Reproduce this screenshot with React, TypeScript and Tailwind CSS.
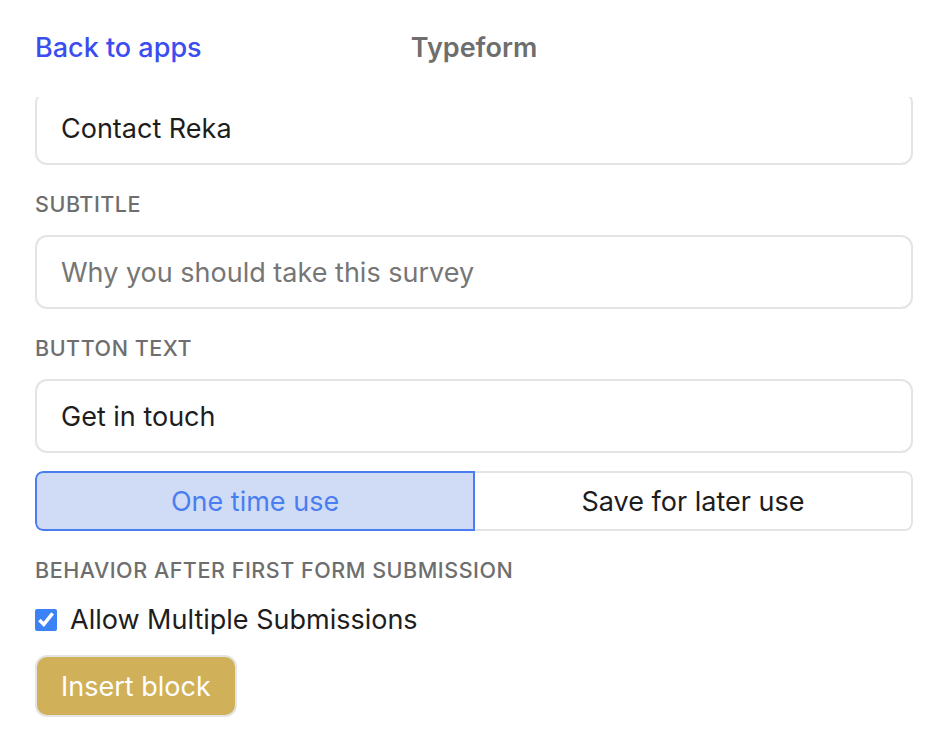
import { useState } from "react";

const font = { fontFamily: "Inter, 'Noto Sans', 'Liberation Sans', sans-serif" };

function Label({ children }: { children: React.ReactNode }) {
  return (
    <div className="text-[21.5px] leading-[24px] font-medium uppercase text-[#6e6e6e] tracking-[0.025em]">
      {children}
    </div>
  );
}

function TextField({ value, placeholder }: { value?: string; placeholder?: string }) {
  return (
    <div className="h-[74px] rounded-[12px] border-2 border-[#e4e4e4] bg-white px-[24px] pt-[3px] flex items-center text-[27px]">
      {value ? (
        <span className="text-[#1d1d1d]">{value}</span>
      ) : (
        <span className="text-[#767676]">{placeholder}</span>
      )}
    </div>
  );
}

export default function App() {
  const [mode, setMode] = useState<"once" | "later">("once");
  const [multi, setMulti] = useState(true);

  return (
    <div className="w-[950px] h-[752px] bg-white pl-[35px] pr-[37px] overflow-hidden" style={font}>
      {/* Header */}
      <div className="h-[97px] grid grid-cols-3 items-center text-[27px] font-medium">
        <a href="#" className="text-[#3b4df0]">
          Back to apps
        </a>
        <div className="text-center text-[#6e6e6e] font-semibold">Typeform</div>
        <div />
      </div>

      {/* Scrolled form content */}
      <div className="overflow-hidden">
        <div className="-mt-[6px]">
          <TextField value="Contact Reka" />

          <div className="mt-[27px] mb-[19px]">
            <Label>Subtitle</Label>
          </div>
          <TextField placeholder="Why you should take this survey" />

          <div className="mt-[27px] mb-[19px]">
            <Label>Button text</Label>
          </div>
          <TextField value="Get in touch" />

          {/* Segmented control */}
          <div className="mt-[18px] h-[60px] flex rounded-[8px] overflow-hidden text-[27px]">
            <button
              onClick={() => setMode("once")}
              className={
                mode === "once"
                  ? "flex-1 pt-[2px] bg-[#d0dcf6] border-2 border-[#4a7ef0] rounded-l-[8px] text-[#4a7ef0]"
                  : "flex-1 pt-[2px] bg-white border-2 border-r-0 border-[#e4e4e4] rounded-l-[8px] text-[#1d1d1d]"
              }
            >
              One time use
            </button>
            <button
              onClick={() => setMode("later")}
              className={
                mode === "later"
                  ? "flex-1 pt-[2px] bg-[#d0dcf6] border-2 border-[#4a7ef0] rounded-r-[8px] text-[#4a7ef0]"
                  : "flex-1 pt-[2px] bg-white border-2 border-l-0 border-[#e4e4e4] rounded-r-[8px] text-[#1d1d1d]"
              }
            >
              Save for later use
            </button>
          </div>

          <div className="mt-[27px]">
            <Label>Behavior after first form submission</Label>
          </div>

          <label className="mt-[23px] h-[30px] flex items-center gap-[13px] text-[27px] text-[#1d1d1d]">
            <input
              type="checkbox"
              checked={multi}
              onChange={(e) => setMulti(e.target.checked)}
              className="w-[22px] h-[22px] accent-[#3b82f6]"
            />
            Allow Multiple Submissions
          </label>

          <button className="mt-[20px] h-[62px] px-[24px] pt-[2px] rounded-[12px] bg-[#d1b05a] border-2 border-[#e4e4e4] text-white text-[27px]">
            Insert block
          </button>
        </div>
      </div>
    </div>
  );
}
